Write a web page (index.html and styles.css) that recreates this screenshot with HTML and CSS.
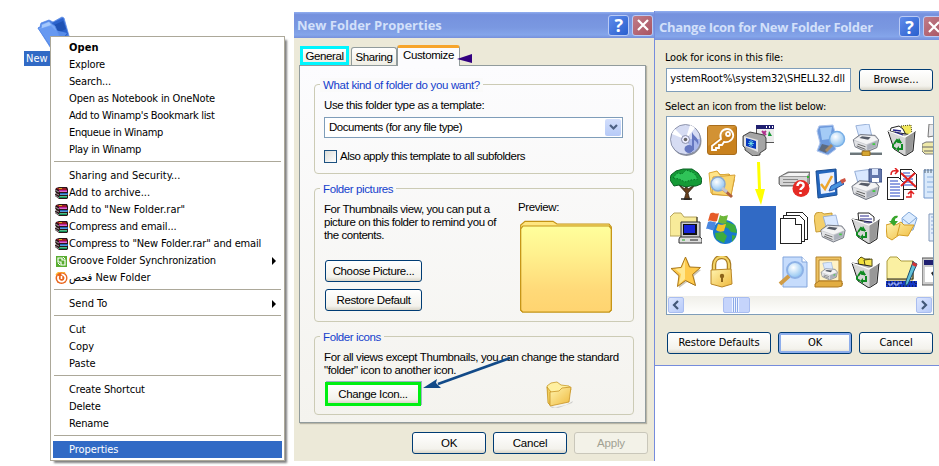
FILE: index.html
```html
<!DOCTYPE html>
<html lang="en">
<head>
<meta charset="utf-8">
<title>New Folder Properties</title>
<link rel="stylesheet" href="styles.css">
</head>
<body>
<svg class="defs" width="0" height="0">
  <defs>
    <linearGradient id="gold" x1="0" y1="0" x2="1" y2="1"><stop offset="0" stop-color="#fff4b0"/><stop offset="1" stop-color="#efb93c"/></linearGradient>
    <linearGradient id="preview" x1="0" y1="0" x2="0" y2="1"><stop offset="0" stop-color="#ffff9c"/><stop offset=".3" stop-color="#fff28f"/><stop offset=".75" stop-color="#ffd978"/><stop offset="1" stop-color="#ffd470"/></linearGradient>
    <radialGradient id="lens" cx=".4" cy=".35" r=".7"><stop offset="0" stop-color="#fff"/><stop offset="1" stop-color="#86bff0"/></radialGradient>
    <symbol id="rar" viewBox="0 0 13 12">
      <path d="M1 1l3-1h8l1 2v9l-1 1H4L0 9V7l1-1-1-2V3z" fill="#2a1518"/>
      <path d="M1 1h10l1 2H4z" fill="#a01828"/><path d="M4 1h3v1H4z" fill="#d0b020"/>
      <path d="M4 3h8v2H4z" fill="#b52aa0"/><path d="M5 4h7v.8H5z" fill="#e77bd8"/>
      <path d="M5 6h8v2H5z" fill="#2266b8"/><path d="M5 7h7v.6H5z" fill="#7cc0f0"/>
      <path d="M4 9h8v2H4z" fill="#108a55"/><path d="M5 9.2h7v.6H5z" fill="#7ddfa8"/>
      <path d="M0 3l4 2M0 6l4 2M0 8l4 3" stroke="#d8d8d8" stroke-width=".7"/>
    </symbol>
    <symbol id="bin" viewBox="0 0 32 32">
      <path d="M2 7l24 4 3-4-2 20-8 5-11-7z" fill="#b8b8b8" stroke="#222" stroke-width="1"/>
      <path d="M3 8l16 5v18L9 25z" fill="#d6d6d6"/><path d="M20 13l8-5-2 18-6 5z" fill="#989898"/>
      <path d="M2 7l17 6 10-6" fill="none" stroke="#fff" stroke-width="1.3"/>
      <path d="M8 20l3-4 4 3M16 20l0 5-4 0M10 25l-3-2 0-3" fill="none" stroke="#108a22" stroke-width="2"/>
      <path d="M13 14l3 5-5 0zM13 22l-3 3 3 3z" fill="#108a22"/>
    </symbol>
    <symbol id="printer" viewBox="0 0 32 32">
      <path d="M5 2l15-2 3 13-14 3z" fill="#d9e8ff" stroke="#8fa9d3"/>
      <path d="M2 18l8-6 17 1 4 5-2 9-12 5L4 26z" fill="#c9cbd0" stroke="#686d78"/>
      <path d="M3 18l8-5 15 1 4 4-13 5z" fill="#f4f4f5"/>
      <path d="M9 16l3-2 10 1-3 3z" fill="#555b67"/>
      <path d="M3 19l14 5v6L4 25z" fill="#e2e3e6"/><path d="M18 24l11-5-1 7-10 4z" fill="#abb0bb"/>
      <path d="M6 25l10 4M7 23l9 3" stroke="#555"/><path d="M24 22h3v2h-3z" fill="#40c840"/>
    </symbol>
  </defs>
</svg>

<div class="desktop">
  <div class="shortcut">
    <svg width="34" height="34" viewBox="0 0 34 34"><path d="M1 13l2-1 1-4 8-3 4 2 9-5 2 1 5 18-9 12-8 2z" fill="#4b7fdf" stroke="#5a8ae6" stroke-width=".8"/><path d="M15 8l11-5 5 16-9 8z" fill="#2c63cc"/><path d="M17 10l9-4 3 8-8 4z" fill="#1f52b4"/><path d="M1 13l3-1 0-3 8-3 3 3 3 2 5 12-8 10z" fill="#78a7f5" stroke="#5689e8" stroke-width=".8"/><path d="M2 14l12-3 4 4 12 3-11 15-4-1z" fill="#6396f0" opacity=".8"/><path d="M5 10l7-3 2 3-9 3z" fill="#a5c8fc"/></svg>
    <div class="shortcut-name">New</div>
  </div>

  <nav class="menu">
    <div class="item strong">Open</div>
    <div class="item">Explore</div>
    <div class="item">Search...</div>
    <div class="item">Open as Notebook in OneNote</div>
    <div class="item tight">Add to Winamp's Bookmark list</div>
    <div class="item tight">Enqueue in Winamp</div>
    <div class="item tight">Play in Winamp</div>
    <hr>
    <div class="item loose">Sharing and Security...</div>
    <div class="item loose"><svg class="mi"><use href="#rar"/></svg>Add to archive...</div>
    <div class="item loose"><svg class="mi"><use href="#rar"/></svg>Add to "New Folder.rar"</div>
    <div class="item"><svg class="mi"><use href="#rar"/></svg>Compress and email...</div>
    <div class="item"><svg class="mi"><use href="#rar"/></svg>Compress to "New Folder.rar" and email</div>
    <div class="item sub"><svg class="mi" viewBox="0 0 13 12"><path d="M1 1h11v11H1z" fill="#58ad2f"/><path d="M3 3h4v2h3v5H6V7H3z" fill="none" stroke="#fff" stroke-width="1.2"/><path d="M8 2l2 2M3 8l2 2" stroke="#fff"/></svg>Groove Folder Synchronization</div>
    <div class="item loose"><svg class="mi" viewBox="0 0 13 12"><circle cx="6.5" cy="6" r="6" fill="#e8641b"/><path d="M6.500 2.300a3.700 3.700 0 1 1-3 1.700" fill="none" stroke="#fff" stroke-width="1.800"/><path d="M6.500 4v3" stroke="#fff" stroke-width="1.600"/><path d="M1 3a6 6 0 0 1 9-2" fill="none" stroke="#ffb52e" stroke-width="1.300"/></svg><span class="arabic">فحص</span>&nbsp;New Folder</div>
    <hr>
    <div class="item loose sub">Send To</div>
    <hr>
    <div class="item">Cut</div>
    <div class="item loose">Copy</div>
    <div class="item loose">Paste</div>
    <hr>
    <div class="item">Create Shortcut</div>
    <div class="item">Delete</div>
    <div class="item">Rename</div>
    <hr>
    <div class="item selected">Properties</div>
  </nav>

  <section class="window props">
    <header class="title"><span class="caption">New Folder Properties</span><span class="tb help">?</span><span class="tb close"><svg width="12" height="12" viewBox="0 0 12 12"><path d="M1 1l10 10M11 1L1 11" stroke="#fff" stroke-width="2.200"/></svg></span></header>
    <div class="tabs">
      <div class="tab marked">General</div><div class="tab sharing">Sharing</div><div class="tab active">Customize</div>
      <svg class="pointer" width="15" height="9"><path d="M0 5L15 0v9z" fill="#330080"/></svg>
    </div>
    <div class="panel">
      <section class="group kind">
        <h2>What kind of folder do you want?</h2>
        <label class="lbl-use">Use this folder type as a template:</label>
        <div class="select"><span>Documents (for any file type)</span><i><svg width="9" height="7" viewBox="0 0 9 7"><path d="M1 1l3.500 3.500L8 1" fill="none" stroke="#4d6185" stroke-width="2.200"/></svg></i></div>
        <div class="check"><i></i><span>Also apply this template to all subfolders</span></div>
      </section>
      <section class="group pictures">
        <h2>Folder pictures</h2>
        <div class="cols">
          <div class="left">
            <p>For Thumbnails view, you can put a<br>picture on this folder to remind you of<br>the contents.</p>
            <div class="btn">Choose Picture...</div>
            <div class="btn">Restore Default</div>
          </div>
          <div class="right">
            <div class="preview-label">Preview:</div>
            <svg width="92" height="93" viewBox="0 0 92 93"><path d="M.7 8V5L5 1.300h28L37 4h52l2.300 3v83l-2 2H2.500L.7 90z" fill="#ffe680" stroke="#c49314" stroke-width="1.200"/><path d="M.7 9L3 6h86l2.300 3v81l-2 2H2.500L.7 90z" fill="url(#preview)" stroke="#c49314" stroke-width="1.200"/></svg>
          </div>
        </div>
      </section>
      <section class="group icons">
        <h2>Folder icons</h2>
        <p>For all views except Thumbnails, you can change the standard<br>"folder" icon to another icon.</p>
        <div class="iconrow"><div class="btn marked-btn">Change Icon...</div>
          <svg width="28" height="28" viewBox="0 0 28 28"><path d="M4 25l2 2 14-3 7-4-1 2-14 5z" fill="#aaa" opacity=".5"/><path d="M1 5l4-3 6-1 4 3 8 1 2 3-4 12-17 4z" fill="#fff0a0" stroke="#c89b28" stroke-width=".8"/><path d="M1 6l4 5-1 13-2-2z" fill="#f2cf5c" stroke="#c59422" stroke-width=".8"/><path d="M4 11l9-1 3-3 9-1-2 15-19 4z" fill="url(#gold)" stroke="#c89325" stroke-width=".8"/></svg></div>
        <svg class="callout" width="88" height="35"><path d="M87 1L15 27" stroke="#124a88" stroke-width="2.600"/><path d="M0 31l14-9-1 4 5 5z" fill="#124a88"/></svg>
      </section>
    </div>
    <footer class="buttons"><div class="btn">OK</div><div class="btn">Cancel</div><div class="btn disabled">Apply</div></footer>
  </section>

  <section class="window change">
    <header class="title"><span class="caption">Change Icon for New Folder Folder</span><span class="tb help">?</span><span class="tb close"><svg width="12" height="12" viewBox="0 0 12 12"><path d="M1 1l10 10M11 1L1 11" stroke="#fff" stroke-width="2.200"/></svg></span></header>
    <div class="body">
      <label class="lbl-look">Look for icons in this file:</label>
      <div class="filerow"><div class="field">ystemRoot%\system32\SHELL32.dll</div><div class="btn">Browse...</div></div>
      <label class="lbl-select">Select an icon from the list below:</label>
      <div class="list">
        <div class="grid">
          <div><svg viewBox="0 0 32 32"><circle cx="16.500" cy="17" r="15" fill="#8d929d"/><circle cx="15.500" cy="15.500" r="15" fill="#d6dcf3" stroke="#777f99" stroke-width=".8"/><path d="M15.500 15.500L5 5a15 15 0 0 0-3 5zM15.500 15.500L20 1a15 15 0 0 1 5 3z" fill="#fff"/><path d="M15 15L30 15a15 15 0 0 1-6 13z" fill="#aab8eb"/><circle cx="15.500" cy="15.500" r="4" fill="#eef" stroke="#8a90aa"/><circle cx="15.500" cy="15.500" r="1.800" fill="#666"/><ellipse cx="19" cy="25" rx="4.500" ry="4" fill="#6577c0"/><path d="M22 26V8c2 5 8 6 6 13-1-4-4-5-4-5v10z" fill="#6577c0"/></svg></div>
          <div><svg viewBox="0 0 32 32"><rect x="1.500" y="1.500" width="29" height="29" rx="2.500" fill="#c9821e" stroke="#a96d1c"/><path d="M2 2h28L2 22z" fill="#d99d43" opacity=".6"/><g fill="none" stroke="#fff" stroke-width="1.800"><path d="M15 15c-2-5 1-10 6-10s8 6 5 10-6 3-8 3l-2 3h-3v3h-3v2H6v-4z"/><circle cx="22" cy="10" r="2"/></g></svg></div>
          <div><svg viewBox="0 0 32 32"><g shape-rendering="crispEdges"><path d="M14 1h18v17H14z" fill="#ececec" stroke="#555"/><path d="M14 1h18v4H14z" fill="#202070"/><path d="M24 2h1v2h-1zM27 2h1v2h-1zM30 2h1v2h-1z" fill="#fff"/></g><path d="M20 7l4 4M24 7l-3 3" stroke="#b0308c" stroke-width="2"/><path d="M27 7l3 5h-4z" fill="#189834"/><path d="M1 12l7-4 14 3 2 3v11l-6 4v2l-7 1-8-6v-2l-2-2z" fill="#a5a5a5" stroke="#222" stroke-width=".8"/><path d="M2 12l14 4v12L2 22z" fill="#e2e2e2"/><path d="M4 14l10 3v8L4 22z" fill="#0838c0"/><path d="M7 17l4 5M11 17l-4 5M9 16v7M6 19.500h6" stroke="#78e8e8" stroke-width=".8"/></svg></div>
          <div></div>
          <div><svg viewBox="0 0 32 32"><path d="M3 7l2-5 14-1 2 7-3 9 4 8-8 6-11-4 3-8z" fill="#6d99dc" stroke="#b1c7ee"/><path d="M6 4l12-1-2 12-8 1z" fill="#a4cbf6"/><path d="M8 20l8 2-4 7-7-3z" fill="#5d6b80"/><circle cx="23" cy="15" r="7.500" fill="url(#lens)" stroke="#78aee6" stroke-width="1.500"/><path d="M18 21l-6 6" stroke="#aa8b63" stroke-width="3"/></svg></div>
          <div><svg viewBox="0 0 32 32"><path d="M0 28h32v3H0z" fill="#6d767a"/><path d="M0 28h32v1H0z" fill="#b7c1c4"/><use href="#printer" x="1" y="0" width="29" height="28"/><rect x="12" y="27" width="8" height="5" rx="1" fill="#d6a732" stroke="#94691b"/></svg></div>
          <div><svg viewBox="0 0 32 32"><path d="M15 2l10-1 1 10-5 4z" fill="#f2e85b" stroke="#4b4718" stroke-dasharray="1 1"/><path d="M4 8l1-4 8-2 4 3 4 8-2 1z" fill="#fff" stroke="#222"/><use href="#bin"/><path d="M7 6l8 1M9 8l8 3" stroke="#24248c" stroke-width="1.300"/></svg></div>
          <div><svg viewBox="0 0 32 32"><path d="M7 0l-1 13 6-1V0z" fill="#e8e8ea" stroke="#777"/><path d="M0 20l4-2h10v12H3l-3-3z" fill="#efe9a9" stroke="#777"/><path d="M0 23h14M2 27h12" stroke="#666"/></svg></div>

          <div><svg viewBox="0 0 32 32"><path d="M14 32l2-7-8-9 7 5 1-4 2 4 8-5-8 9 2 7z" fill="#67401e" stroke="#271b0c" stroke-width=".7"/><path d="M0 12l1-5 5-4 7-2 9 0 6 4 4 6-1 5-5 2-6 0-4 1-7-2-5 1z" fill="#159b36" stroke="#0a6023"/><path d="M3 10l4-5 5 1 4-4 8 3 4 6-7 1-6 2-6-3z" fill="#2fc458" stroke="#087228" stroke-dasharray="1.500 1.500"/><path d="M11 31h11" stroke="#222" stroke-width="1.500"/></svg></div>
          <div><svg viewBox="0 0 32 32"><path d="M4 5l7-2 3 3h10v7l5-2-4 17-19-1z" fill="#c59c39"/><path d="M3 5l8-2 3 4 9-1-2 21-16-2z" fill="#ffe58a" stroke="#dda937"/><path d="M7 9l22-2-4 21-19-2z" fill="#f9d66f" stroke="#d7a034"/><circle cx="12" cy="16" r="7" fill="url(#lens)" stroke="#8aa9d0" stroke-width="1.500"/><path d="M17 21l9 8" stroke="#ae5f40" stroke-width="3"/><path d="M16 20l5 4" stroke="#c5c5ce" stroke-width="3"/></svg></div>
          <div class="down"><svg viewBox="0 0 32 44"><path d="M15 0h3l1 27h4l-4 16-6-16h3z" fill="#ffff00"/></svg></div>
          <div><svg viewBox="0 0 32 32"><path d="M3 8l7-4h22v11l-3 3H3l-2-2V9z" fill="#9a9a9a" stroke="#555" stroke-width=".8"/><path d="M2 9h27v8H2z" fill="#d5d5d5"/><path d="M4 8l7-3h20l-2 3z" fill="#f3f3f3"/><path d="M5 11h15v1H5zM5 14h15v1H5z" fill="#888"/><path d="M29 8h2v2h-2z" fill="#2fbb30"/><circle cx="23" cy="20.500" r="8.500" fill="#e52b25"/><path d="M19.500 18c0-5 7-4 6 0-.5 2-3 2-3 4M22.500 24v2" fill="none" stroke="#fff" stroke-width="2.500"/></svg></div>
          <div><svg viewBox="0 0 32 32"><path d="M2 3l20-2 1 26-19 3z" fill="#2366be" stroke="#174b91"/><path d="M5 6l15-2 1 20-14 2z" fill="#e9f0ff"/><path d="M7 16l4 5 7-13" fill="none" stroke="#eda52b" stroke-width="2.500"/><path d="M17 18l10-5 3 3-11 6-4 1z" fill="#4894df" stroke="#2754a8"/><path d="M26 12l5-2 1 3-4 3z" fill="#ce5444"/></svg></div>
          <div><svg viewBox="0 0 32 32"><use href="#printer" x="0" y="1" width="30" height="31"/><path d="M19 1h12l1 1v12H19z" fill="#6276aa" stroke="#3d5084"/><path d="M22 1h6v6h-6z" fill="#d7e3fa"/><path d="M22 10h7v4h-7z" fill="#fff"/></svg></div>
          <div><svg viewBox="0 0 32 32"><g fill="#fff" stroke="#222" shape-rendering="crispEdges"><path d="M14 1h11l5 5v15H14z"/><path d="M1 9h11l5 5v17H1z"/></g><path d="M17 5h7M17 8h9M17 11h10M17 14h10M17 17h10M4 13h8M4 16h10M4 19h10M4 22h10M4 25h10M4 28h10" stroke="#2444c4"/><path d="M15 5l15 14M29 5L15 18" stroke="#e11d1d" stroke-width="2"/><path d="M5 7c0-4 2-5 6-4M9 0l3 3-3 3M20 29h5v-5M22 26l3-3 3 3" fill="none" stroke="#e11d1d" stroke-width="1.500"/></svg></div>
          <div><svg viewBox="0 0 32 32"><path d="M2 2h12v28H2z" fill="#d9e9fb" stroke="#7499cd"/><path d="M3 1v4M6 1v4M9 1v4" stroke="#567"/><path d="M5 9h7M5 14h7M5 19h7M5 24h7" stroke="#8ab0df"/></svg></div>

          <div><svg viewBox="0 0 32 32"><path d="M0 5l4-4h7l3 4h13v19H0z" fill="#f8eb9a" stroke="#b5a45d"/><path d="M27 5v6" stroke="#222"/><path d="M11 10h19v16H11z" fill="#ccc" stroke="#333"/><path d="M13 12h14v11H13z" fill="#111"/><path d="M14 13h11v8H14z" fill="#1826dc"/><path d="M10 25h20l2 2v4H9v-4z" fill="#ddd" stroke="#333"/><path d="M20 28h8" stroke="#222"/><path d="M12 28h3" stroke="#2a2"/></svg></div>
          <div><svg viewBox="0 0 32 32"><circle cx="19" cy="20" r="12" fill="#1978ce"/><path d="M19 9l10 4 2 8-6-1-3-4-5-1zM9 21l8-1 4 4-3 7-8-4zM26 23l4 1-4 6z" fill="#3dac3e"/><path d="M4 2c3-3 6 1 9-1l-2 8c-3 2-6-2-9 0z" fill="#e65b28"/><path d="M14 3c3 2 5 1 8 0l-2 8c-3 1-5 1-8-1z" fill="#6db739"/><path d="M2 10c3-2 6 1 8 0l-2 8c-3 1-5-2-8-1z" fill="#4a87df"/><path d="M12 12c3 1 4 1 8 0l-2 7c-3 1-5 1-8-1z" fill="#f4c22c"/></svg></div>
          <div class="cell-selected"></div>
          <div><svg viewBox="0 0 32 32"><g fill="#fff" stroke="#222" stroke-width="1" shape-rendering="crispEdges"><path d="M8.500 .5h16l5 5v22h-21z"/><path d="M5.500 3.500h16l5 5v21h-21z"/><path d="M2.500 6.500h15l6 6v19h-21z"/><path d="M17.500 6.500v6h6"/></g></svg></div>
          <div><svg viewBox="0 0 32 32"><path d="M0 5l2-4 5-1 3 2 8-1v17L2 20z" fill="#f4cf6a" stroke="#c69b35"/><use href="#printer" x="5" y="2" width="27" height="29"/></svg></div>
          <div><svg viewBox="0 0 32 32"><path d="M8 1h11l5 4v8l-5 1-10-3z" fill="#fff" stroke="#222"/><use href="#bin"/><path d="M10 4h9M10 7h12M14 10h8" stroke="#28288c" stroke-width="1.200"/></svg></div>
          <div><svg viewBox="0 0 32 32"><path d="M16 6l7-6 8 6-4 12-10 1z" fill="#dcecff" stroke="#7ea6d8"/><path d="M17 7l6 5 7-6" fill="none" stroke="#7ea6d8"/><path d="M0 13l7-2 3 2 5-3 3 3 10 0-6 11-9-1-7 5-5-3z" fill="url(#gold)" stroke="#d49e25"/><path d="M14 12l-3 12" stroke="#d49e25"/><path d="M5 9c1-4 4-6 7-5l-1 2c-2 0-2 1-2 3l3 0-4 5-5-5z" fill="#39a62c"/></svg></div>
          <div><svg viewBox="0 0 32 32"><path d="M7 2h10v27H7z" fill="#e4eefb" stroke="#8499ba"/><path d="M9 5h5M9 9h5M9 13h5M9 17h5M9 21h5" stroke="#8fa8db"/></svg></div>

          <div><svg viewBox="0 0 32 32"><path d="M17 3l4 9 10 2-7 6 2 10-9-4-8 6 1-10-7-7 10-1z" fill="#9b8d71" opacity=".5"/><path d="M15.500 1l4 10 11 .5-8 7 3 11-10-5-8 6 1.500-11-8-7 10-1z" fill="#ffca4c" stroke="#a97718"/><path d="M15 4v19l-6 5 2-10-6-5 7-1z" fill="#ffe892"/></svg></div>
          <div><svg viewBox="0 0 32 32"><path d="M8 15V9C8-1 22-2 23 8v7" fill="none" stroke="#a87a20" stroke-width="4.500"/><path d="M8 15V9C8-1 22-2 23 8v7" fill="none" stroke="#f3d467" stroke-width="2.200"/><path d="M5 14l20-1 1 15-10 3-11-3z" fill="url(#gold)" stroke="#b98626"/><circle cx="16" cy="20" r="2.200" fill="#8d631a"/><path d="M15 20h2v6h-2z" fill="#8d631a"/></svg></div>
          <div></div>
          <div><svg viewBox="0 0 32 32"><path d="M5 1h19l5 5v25H5z" fill="#c6dcfc" stroke="#82a5dc"/><path d="M24 1v5h5" fill="#fff" stroke="#82a5dc"/><circle cx="17" cy="14" r="8" fill="url(#lens)" stroke="#8db1e6" stroke-width="2"/><path d="M11 20l-9 8" stroke="#d09c46" stroke-width="4"/></svg></div>
          <div><svg viewBox="0 0 32 32"><path d="M2 1h25v25l2 2H2z" fill="#eec261" stroke="#b5852e"/><path d="M5 4h20v21H5z" fill="#fff2c7" stroke="#b5852e"/><path d="M1 28l4-3h23v5l-4 1H1z" fill="#e2ad42" stroke="#ad7921"/><use href="#printer" x="6" y="6" width="18" height="18"/></svg></div>
          <div><svg viewBox="0 0 32 32"><path d="M8 4l3-3 4 2h5v11l-11-3z" fill="#f1df39" stroke="#514a16"/><path d="M14 4l8-1v10l-6 1z" fill="#f6e652" stroke="#514a16"/><use href="#bin"/></svg></div>
          <div><svg viewBox="0 0 32 32"><path d="M1 5l3-4h7l4 4h12v19H1z" fill="#faf0a2" stroke="#aa9a3c"/><path d="M27 5v18H1" fill="none" stroke="#222"/><path d="M0 25h31v6H0z" fill="#1537c5"/><path d="M1 26h29v4H1z" fill="none" stroke="#111" stroke-dasharray="1 2"/><path d="M3 27v2h3v-2h3v2h3v-2h4" fill="none" stroke="#fff" stroke-width=".7"/><path d="M27 6l4 2-9 20-3 2 1-5z" fill="#62c2d8" stroke="#1c4c70"/><path d="M27 6l4 2-1 3-4-2z" fill="#d63434"/></svg></div>
          <div><svg viewBox="0 0 32 32"><path d="M0 2h20v27H0z" fill="#ccc" stroke="#555"/><path d="M2 4h18v5H2z" fill="#202070"/><path d="M3 11h15v15H3z" fill="#fff"/><path d="M9 17l4-3v9z" fill="#222"/></svg></div>
        </div>
        <div class="scroll"><span class="sb"><svg width="8" height="10" viewBox="0 0 8 10"><path d="M6 1L2 5l4 4" fill="none" stroke="#435879" stroke-width="2.200"/></svg></span><span class="thumb"></span><span class="sb end"><svg width="8" height="10" viewBox="0 0 8 10"><path d="M2 1l4 4-4 4" fill="none" stroke="#435879" stroke-width="2.200"/></svg></span></div>
      </div>
      <footer class="buttons"><div class="btn wide">Restore Defaults</div><div class="btn default">OK</div><div class="btn">Cancel</div></footer>
    </div>
  </section>
</div>
</body>
</html>
```
FILE: styles.css
```css
* { box-sizing: border-box; }
body { margin: 0; background: #fff; overflow: hidden; }
.defs { position: absolute; }
.desktop { position: relative; width: 939px; height: 466px; overflow: hidden; font: 11px/17px "DejaVu Sans Condensed", "DejaVu Sans", sans-serif; font-stretch: condensed; color: #000; white-space: nowrap; }

.shortcut { position: absolute; left: 24px; top: 15px; width: 52px; }
.shortcut svg { display: block; margin-left: 13px; }
.shortcut-name { margin-top: 2px; height: 15px; padding-left: 2px; line-height: 15px; background: #316ac5; color: #fff; }

.menu { position: absolute; left: 50px; top: 36px; width: 235px; height: 425px; padding: 2px; border: 1px solid #aca899; background: #fff; box-shadow: 3px 3px 2px -1px rgba(0,0,0,.5); letter-spacing: -.16px; }
.item { position: relative; display: flex; align-items: center; height: 17px; padding-left: 16px; }
.item.strong { font-weight: bold; letter-spacing: .1px; }
.item.tight { letter-spacing: -.32px; }
.item.loose { letter-spacing: 0; }
.item.selected { background: #316ac5; color: #fff; letter-spacing: -.05px; }
.item.sub::after { content: ""; margin: 0 6px 0 auto; border: 4px solid transparent; border-left-color: #000; border-right: 0; }
.mi { width: 13px; height: 12px; margin: 0 1px 0 -14px; flex: none; }
.arabic { font-size: 11px; }
.menu hr { height: 1px; margin: 3px 1px 5px; border: 0; background: #aca899; }

.window { position: absolute; background: #ece9d8; }
.title { display: flex; align-items: center; background: linear-gradient(#92aff0 0, #7591de 10%, #7a98e1 60%, #84a5ea 88%, #7690db); }
.caption { flex: 1; color: #d3e0fa; font: bold 13px/20px "Open Sans", sans-serif; letter-spacing: 0; }
.tb { display: flex; align-items: center; justify-content: center; width: 21px; height: 21px; margin-left: 3px; border: 1px solid #b9caf5; border-radius: 3px; color: #fff; font: bold 18px/18px "Open Sans", sans-serif; flex: none; }
.help { background: linear-gradient(135deg, #5f8bea, #295fce); }
.close { background: linear-gradient(135deg, #c07c88, #a95462); }
.btn { display: flex; align-items: center; justify-content: center; width: 74px; height: 22px; border: 1px solid #003c74; border-radius: 3px; background: linear-gradient(#fff, #f3f2ec 80%, #d9d5c8); }

.props { left: 294px; top: 12px; width: 361px; height: 449px; border-right: 1px solid #768cdc; font-family: "Liberation Sans", sans-serif; font-size: 11.5px; line-height: 13px; letter-spacing: -.39px; font-stretch: normal; }
.props .title { height: 26px; padding: 0 1px 0 3px; }
.tabs { display: flex; align-items: flex-end; height: 27px; padding-left: 6px; }
.tab { display: flex; align-items: center; justify-content: center; height: 18px; border: 1px solid #919b9c; border-bottom: 0; border-radius: 3px 3px 0 0; background: linear-gradient(#fff, #efeee5); }
.tab.marked { width: 49px; height: 19px; padding-top: 2px; border: 3px solid #00f6ff; border-radius: 0; }
.tab.sharing { width: 46px; margin-left: 2px; padding-top: 2px; }
.tab.active { width: 63px; height: 21px; margin-bottom: -1px; border-top: 3px solid #f7a52c; background: #fcfcfe; z-index: 1; padding-bottom: 3px; }
.pointer { margin: 0 0 2px -3px; z-index: 2; }
.panel { width: 347px; height: 358px; margin-left: 5px; padding: 18px 0 0 14px; border: 1px solid #919b9c; background: linear-gradient(#fcfcfe, #f4f3ee); box-shadow: 1px 1px 1px #b8b5a6; }
.group { position: relative; width: 320px; border: 1px solid #cccbb5; border-radius: 4px; padding-left: 9px; }
.group h2 { width: max-content; margin: -7px 0 0 -4px; padding: 0 3px; background: #fafafa; color: #1440cc; font-size: 11.5px; font-weight: normal; line-height: 14px; }
.group p { margin: 0; line-height: 13px; }
.kind { height: 90px; }
.kind h2 { letter-spacing: -.33px; }
.kind label { display: block; margin-top: 6px; line-height: 14px; }
.select { display: flex; align-items: center; width: 299px; height: 21px; margin-top: 5px; padding: 0 1px 0 4px; border: 1px solid #7f9db9; background: #fff; letter-spacing: -.48px; }
.select span { flex: 1; }
.select i { display: flex; align-items: center; justify-content: center; width: 16px; height: 17px; border-radius: 2px; background: linear-gradient(#d2defc, #b6caf7); }
.check { display: flex; align-items: center; gap: 3px; margin-top: 12px; height: 13px; letter-spacing: -.48px; }
.check i { width: 13px; height: 13px; border: 1px solid #1c5180; background: linear-gradient(135deg, #dcdcd7, #fff); }
.pictures { height: 134px; margin-top: 14px; }
.pictures h2 { background: #f9f9f9; }
.pictures p { letter-spacing: -.44px; }
.cols { display: flex; }
.left { width: 194px; padding-top: 7px; }
.left .btn { width: 97px; margin: 18px 0 0 1px; }
.left .btn + .btn { margin-top: 7px; }
.right { padding-top: 5px; }
.right svg { display: block; margin: 6px 0 0 2px; }
.icons { height: 79px; margin-top: 14px; }
.icons h2 { background: #f6f5f2; }
.icons p { margin-top: 7px; }
.iconrow { display: flex; margin-top: 5px; }
.marked-btn { width: 96px; height: 24px; margin-left: 1px; border: 3px solid #00ef12; border-radius: 0; box-shadow: 1px -1px 0 #9eb0c4; }
.iconrow svg { margin: -1px 0 0 125px; }
.callout { position: absolute; left: 108px; top: 20px; }
.buttons { display: flex; gap: 7px; }
.props .buttons { margin: 9px 0 0 118px; }
.props .buttons .btn { letter-spacing: -.2px; }
.props .disabled { color: #a1a192; border-color: #c9c7ba; background: #f3f2e8; }

.change { left: 654px; top: 11px; width: 290px; height: 355px; border: solid #768cdc; border-width: 0 0 1px 1px; }
.change .title { height: 29px; padding: 2px 0 0 4px; }
.change .caption { flex: none; width: 240px; letter-spacing: -.28px; }
.change .tb { margin: 0 3px 0 0; }
.body { padding: 10px 0 0 11px; line-height: 16px; }
.body label { display: block; height: 16px; margin-left: -1px; letter-spacing: -.2px; }
.filerow { display: flex; align-items: center; gap: 8px; margin-top: 2px; }
.field { display: flex; align-items: center; justify-content: flex-end; width: 185px; height: 24px; padding: 0 5px 2px 0; border: 1px solid #7f9db9; background: #fff; letter-spacing: -.04px; }
.body .lbl-select { margin-top: 7px; height: 17px; }
.list { width: 268px; height: 199px; border: 1px solid #7f9db9; background: #fff; overflow: hidden; padding-top: 1px; }
.grid { display: grid; grid-template-columns: repeat(8, 36px); grid-auto-rows: 44px; padding-left: 1px; height: 178px; }
.grid > div { display: flex; align-items: center; justify-content: center; }
.grid svg { width: 32px; height: 32px; flex: none; }
.grid .down svg { height: 44px; }
.cell-selected { background: #316ac5; }
.scroll { display: flex; align-items: center; height: 17px; padding: 0 1px; background: linear-gradient(#f0efe9, #fefefc); }
.sb { display: flex; align-items: center; justify-content: center; width: 16px; height: 16px; border: 1px solid #a9bdf0; border-radius: 2px; background: linear-gradient(135deg, #dce6ff, #b7caf8); }
.sb.end { margin-left: auto; }
.thumb { width: 27px; height: 16px; margin-left: 39px; border: 1px solid #a9bdf0; border-radius: 2px; background: linear-gradient(90deg, transparent 8px, #eef4ff 8px 9px, #8caae8 9px 10px, #eef4ff 10px 11px, #8caae8 11px 12px, #eef4ff 12px 13px, #8caae8 13px 14px, #eef4ff 14px 15px, transparent 15px), #c5d4fb; }
.body .buttons { margin: 17px 0 0 1px; }
.body .btn { letter-spacing: -.05px; }
.btn.wide { width: 104px; }
.btn.default { box-shadow: inset 0 0 0 2px #8eaeec; }
```
